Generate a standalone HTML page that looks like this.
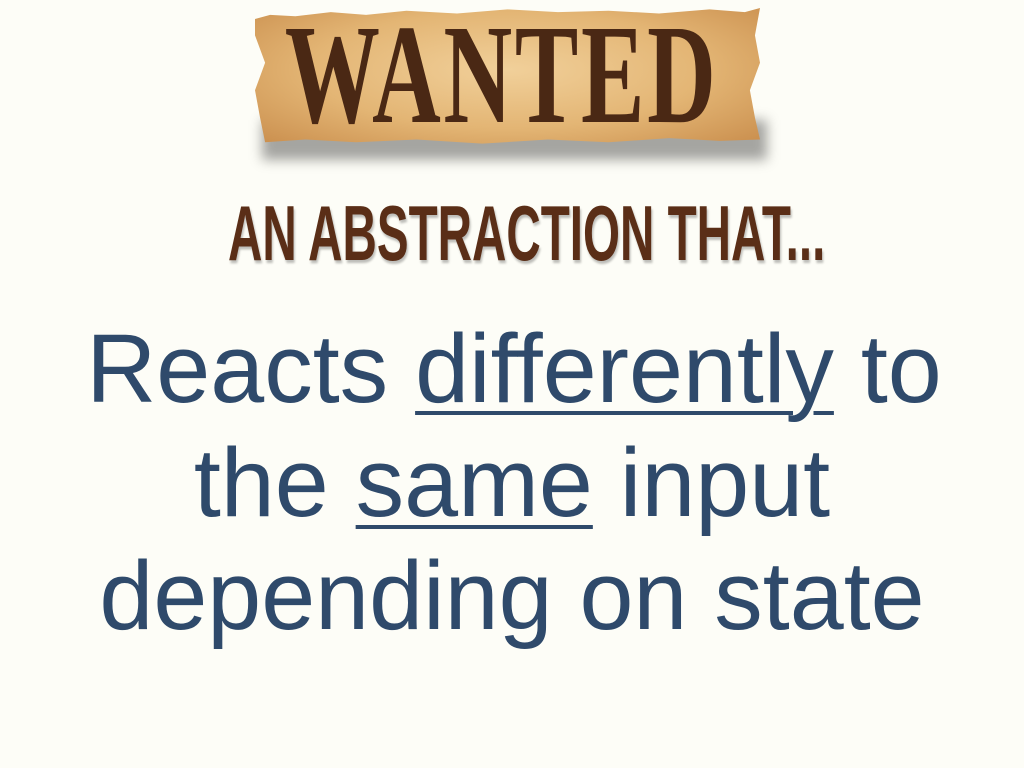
<!DOCTYPE html>
<html><head><meta charset="utf-8"><style>
html,body{margin:0;padding:0;}
body{width:1024px;height:768px;background:#fdfdf7;position:relative;overflow:hidden;font-family:"Liberation Sans",Helvetica,Arial,sans-serif;}
.paper{position:absolute;left:255px;top:8px;width:505px;height:137px;
 background:radial-gradient(ellipse at 50% 45%,#f1d09a 0%,#e3b574 55%,#c98d4c 100%);
 clip-path:polygon(0% 8%,3% 5%,8% 6%,15% 3%,22% 5%,30% 2%,40% 4%,50% 1%,60% 3%,70% 2%,80% 4%,90% 1%,97% 3%,100% 0%,99% 20%,100% 40%,98% 60%,99% 80%,100% 96%,92% 97%,82% 95%,70% 98%,58% 96%,45% 99%,32% 96%,20% 98%,10% 96%,2% 98%,1% 80%,0% 60%,2% 40%,0% 20%);}
.shadow{position:absolute;left:262px;top:120px;width:505px;height:40px;background:rgba(0,0,0,0.35);filter:blur(6px);}
.wanted{position:absolute;left:0;top:9px;width:1004px;text-align:center;font-family:"Liberation Serif",serif;font-weight:bold;font-size:142px;line-height:130px;color:#4a2814;}
.wanted span{display:inline-block;transform:scaleX(0.67);letter-spacing:4px;}
.sub{position:absolute;left:0;top:188px;width:1054px;text-align:center;font-family:"Liberation Sans Narrow","Liberation Sans",sans-serif;font-weight:bold;font-size:78px;line-height:90px;color:#5a2e17;text-shadow:2px 3px 3px rgba(0,0,0,0.25);}
.sub span{display:inline-block;transform:scaleX(0.61);}
.line{position:absolute;left:0;width:1024px;text-align:center;font-size:97px;line-height:114px;color:#2f4a6b;white-space:nowrap;}
u{text-decoration-thickness:4px;text-underline-offset:9px;}
</style></head><body>
<div class="shadow"></div>
<div class="paper"></div>
<div class="wanted"><span>WANTED</span></div>
<div class="sub"><span>AN ABSTRACTION THAT...</span></div>
<div class="line" style="top:312px;left:2px">Reacts <u>differently</u> to</div>
<div class="line" style="top:426px">the <u>same</u> input</div>
<div class="line" style="top:539px">depending on state</div>
</body></html>
